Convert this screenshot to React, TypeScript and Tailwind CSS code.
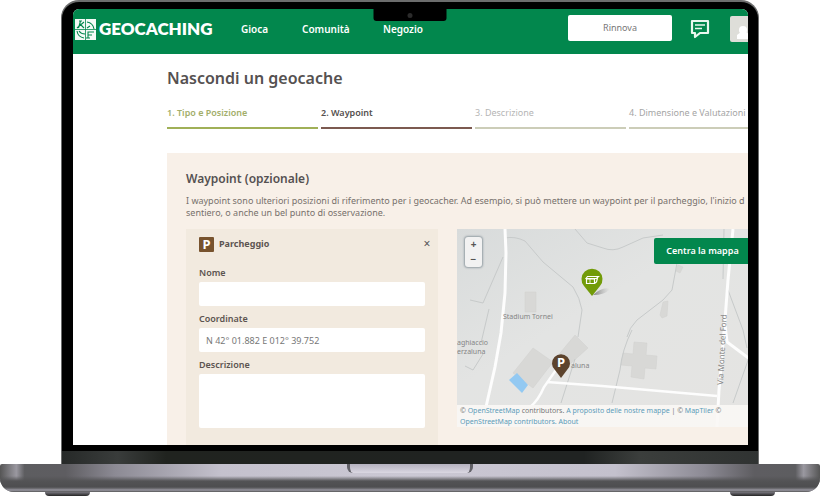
import React from 'react';

const navItems = [
  { label: 'Gioca', className: 'w-[61px]' },
  { label: 'Comunità', className: 'w-[81px]' },
  { label: 'Negozio', className: 'w-[60px]' },
];

const steps = [
  { label: '1. Tipo e Posizione', className: 'font-semibold text-[#a3ae6a] border-[#a0b057]' },
  { label: '2. Waypoint', className: 'font-semibold text-[#55504e] border-[#7c5a50]' },
  { label: '3. Descrizione', className: 'text-[#b5b5b5] border-[#cccdb8]' },
  { label: '4. Dimensione e Valutazioni', className: 'text-[#a5a5a5] border-[#cccdb8]' },
];

const LogoMark = () => (
  <svg viewBox="0 0 21 21" className="h-[21px] w-[21px] shrink-0" aria-hidden="true">
    <path fill="#f4faf6" d="M0 0h21v21H0z" />
    <g fill="none" stroke="#02874d" strokeWidth="1.1">
      <path d="M10.500 0v21M0 10.500h21" strokeWidth="0.800" />
      <path d="M4 2h3M5.500 2l-2 7M5 5l4 4M2 9l7-6" />
      <path d="M12 3q6 1 7 7M12 9l3-2" />
      <path d="M2 12q1 6 7 7M4 12q2 3 6 3" />
      <path d="M13 19v-6h6M13 16h4M11 19h4" />
    </g>
  </svg>
);

const Header = () => (
  <header className="flex h-[45px] items-center bg-[#02874d] pb-[5px] pl-[2px] text-white">
    <a href="#" className="flex w-[166px] shrink-0 items-center gap-[3px]">
      <LogoMark />
      <span className="font-[Lato] text-[17px] font-extrabold leading-5">GEOCACHING</span>
    </a>
    <nav className="flex shrink-0 text-[10px] font-semibold leading-4">
      {navItems.map((item) => (
        <a key={item.label} href="#" className={item.className}>
          {item.label}
        </a>
      ))}
    </nav>
    <div className="-mr-[8px] ml-auto flex shrink-0 items-center">
      <button className="mb-[2px] h-[26px] w-[104px] rounded-[2px] bg-white text-[9px] text-[#777]">Rinnova</button>
      <svg viewBox="0 0 20 20" className="ml-[18px] mr-[20px] h-5 w-5" fill="none" stroke="#e9f8ef" aria-hidden="true">
        <path d="M2 2h16v12h-8l-5 4v-4H2z" strokeWidth="2.200" strokeLinejoin="round" />
        <path d="M5 6h10M5 9.500h7" strokeWidth="1.600" />
      </svg>
      <svg viewBox="0 0 26 26" className="h-[26px] w-[26px]" aria-hidden="true">
        <rect width="26" height="26" rx="2" fill="#deded9" />
        <circle cx="13" cy="14" r="4" fill="#fff" />
        <path d="M7 23v-4l4-3h5l4 3v4z" fill="#fff" />
      </svg>
    </div>
  </header>
);

const WaypointForm = () => (
  <form className="w-[252px] shrink-0 bg-[#f2eadf] px-[13px] pb-[17px] pt-[7px] text-[9px]">
    <div className="mb-[15px] flex h-4 items-center gap-[5px]">
      <span className="flex h-[15px] w-[15px] items-center justify-center rounded-[1px] bg-[#78532e] text-[13px] font-bold leading-none text-white">
        P
      </span>
      <h3 className="font-bold text-[#5c5450]">Parcheggio</h3>
      <button type="button" aria-label="Chiudi" className="-mr-[10px] ml-auto w-4 text-center text-[12px] leading-4 text-[#555]">
        ×
      </button>
    </div>
    <div className="flex flex-col gap-[7px] font-semibold leading-3 text-[#5c5450]">
      <label className="flex flex-col gap-[3px]">
        Nome
        <input type="text" className="h-6 w-full rounded-[2px] bg-white px-[7px] font-normal" />
      </label>
      <label className="flex flex-col gap-[3px]">
        Coordinate
        <input
          type="text"
          defaultValue="N 42° 01.882 E 012° 39.752"
          className="h-6 w-full rounded-[2px] bg-white px-[7px] font-normal text-[#777]"
        />
      </label>
      <label className="flex flex-col gap-[3px]">
        Descrizione
        <textarea className="h-[54px] w-full resize-none rounded-[2px] bg-white px-[7px] font-normal" />
      </label>
    </div>
  </form>
);

const MapDrawing = () => (
  <svg viewBox="0 0 330 198" className="h-[198px] w-[330px]" role="img" aria-label="Mappa">
    <defs>
      <linearGradient id="land" x1="0" y1="0" x2="1" y2="1">
        <stop offset="0" stopColor="#d8dbdb" />
        <stop offset="0.400" stopColor="#e3e4e3" />
        <stop offset="1" stopColor="#e5e4e2" />
      </linearGradient>
      <linearGradient id="shade" x1="0" x2="1">
        <stop offset="0" stopColor="#555" stopOpacity="0.700" />
        <stop offset="1" stopColor="#999" stopOpacity="0" />
      </linearGradient>
    </defs>
    <rect width="330" height="198" fill="url(#land)" />
    {/* Buildings */}
    <g fill="#d8d8d6" stroke="#d0d0ce" strokeWidth="0.500">
      <path d="M68 63h11v20H68zM76 119l20 14-20 26-20-15zM118 106l13 13-29 26-8-10zM221 36l5 2-3 6-4-2zM206 73l5-1-1 15-5 2-2-3z" />
      <path d="M177 113l13 1-1 12 11 1-1 13-11-1-1 11-13-2 1-11-11-1 2-12 10 1z" />
    </g>
    <path d="M60 144l11 12-6 8-13-13z" fill="#93c9f2" />
    {/* Footpaths */}
    <g fill="none" stroke="#c7caca" strokeWidth="1">
      <path d="M48 9q10-2 20 3l18 21 30 25q7 11 9 23l-4 27M118 0l12 14 16 5q10 4 20-1l20-9 20-3" />
      <path d="M220 34l-5 27-9 10-26 20q-8 8-10 17M175 101q-10 20-12 40l-8 33M271 61l15 40 4 18M295 120l-19 54" />
      <path d="M46 28l-20 46-13-3M32 80l-8 34M26 125l-10 16-8-4M118 130l-14 44" />
      <path d="M267 0l-1 50" />
    </g>
    {/* Streets */}
    <g fill="none" stroke="#fdfdfd" strokeWidth="3">
      <path d="M48 0l1 24-1 40-4 40-6 34-9 40" />
      <path d="M276 0l-5 51-3 40-6 70-2 37M268 96l2 17 20 15 40 20" />
      <path d="M73 178q8-6 14-20l14-20M90 153l55 4 115 10" strokeWidth="2.500" />
    </g>
    <g fontFamily="Noto Sans, sans-serif" fontSize="7" fill="#858585">
      <text x="46" y="90">Stadium Tornei</text>
      <text x="0" y="116">aghiaccio</text>
      <text x="0" y="125">erzaluna</text>
      <text x="114" y="139">aluna</text>
      <text x="266" y="156" fontSize="8" transform="rotate(-87 266 156)">Via Monte del Ford</text>
    </g>
    {/* Pins */}
    <path d="M136 66q10-9 17-6-5 6-17 6z" fill="url(#shade)" />
    <path d="M135 67l-8-10a10.500 10.500 0 1 1 16 0z" fill="#729b09" />
    <path d="M129.500 50h8v4.500h-8zM129 49.500l1.500-2h11l-2 2zM137.500 54.500l2-1.500 1-4" fill="none" stroke="#fff" strokeWidth="1.200" />
    <path d="M133 50v4" stroke="#fff" strokeWidth="0.800" />
    <path d="M104 149l-6-8a9 9 0 1 1 12 0z" fill="#5c432d" />
    <text x="104" y="138" textAnchor="middle" fontFamily="Noto Sans, sans-serif" fontSize="13" fontWeight="700" fill="#fff">
      P
    </text>
  </svg>
);

const WaypointMap = () => (
  <div className="relative min-w-0 flex-1 self-start overflow-hidden">
    <MapDrawing />
    <div className="absolute left-2 top-2 flex h-[30px] w-[17px] flex-col rounded-[3px] bg-[#f2f2f2] text-[10px] font-bold leading-[15px] text-[#555] shadow-[0_0_2px_1px_#96a0a6]">
      <button aria-label="Ingrandisci">+</button>
      <button aria-label="Riduci">−</button>
    </div>
    <button className="absolute left-[197px] top-[9px] h-[26px] w-[97px] rounded-[2px] bg-[#02874d] text-[9px] font-semibold text-white">
      Centra la mappa
    </button>
    <div className="absolute inset-x-0 bottom-0 h-[22px] whitespace-nowrap bg-[#f9f7f5]/90 pl-[3px] text-[7px] leading-[11px] text-[#777]">
      © <a href="#" className="text-[#5b9bb9]">OpenStreetMap</a> contributors. <a href="#" className="text-[#5b9bb9]">A proposito delle nostre mappe</a> | ©{' '}
      <a href="#" className="text-[#5b9bb9]">MapTiler</a> ©
      <br />
      <a href="#" className="text-[#5b9bb9]">OpenStreetMap contributors. About</a>
    </div>
  </div>
);

const HideGeocachePage = () => (
  <div className="overflow-hidden rounded-t-[6px] bg-white font-['Noto_Sans',sans-serif]">
    <Header />
    <main className="pl-[94px]">
      <h1 className="pt-[14px] text-[16px] font-semibold leading-5 text-[#555151]">Nascondi un geocache</h1>
      <ol className="mt-[17px] grid min-w-[613px] grid-cols-4 gap-[3px] text-[9px] leading-4">
        {steps.map((step) => (
          <li key={step.label} className={`h-[24px] whitespace-nowrap border-b-2 ${step.className}`}>
            {step.label}
          </li>
        ))}
      </ol>
      <section className="mt-[24px] bg-[#f8f0e8] pl-[19px] pt-[18px]">
        <h2 className="text-[12px] font-semibold leading-4 text-[#555151]">Waypoint (opzionale)</h2>
        <p className="mb-[10px] mt-[8px] whitespace-nowrap text-[9px] leading-3 text-[#77716c]">
          I waypoint sono ulteriori posizioni di riferimento per i geocacher. Ad esempio, si può mettere un waypoint per il parcheggio, l'inizio d
          <br />
          sentiero, o anche un bel punto di osservazione.
        </p>
        <div className="flex gap-[19px]">
          <WaypointForm />
          <WaypointMap />
        </div>
      </section>
    </main>
  </div>
);

const LaptopBase = () => (
  <div>
    <div className="relative h-[28px] overflow-hidden rounded-b-[14px] rounded-t-[2px] bg-[linear-gradient(90deg,#555_0%,#9a98a0_2%,#5d5d60_3%,#5e5d61_8%,#8c8a94_14%,#c4c1cd_27%,#cbc8d4_50%,#c4c1cd_75%,#8c8a94_86%,#5e5d61_92%,#5d5d60_97%,#9a98a0_98%,#555_100%)]">
      <div className="h-full bg-[linear-gradient(180deg,#55555700_0px,#55555700_12px,#535355_17px,#4e4e50_23px,#77767b_25px,#9a98a3_26px,#555_28px)]" />
      <div className="absolute left-1/2 top-0 h-[9px] w-[126px] -translate-x-1/2 rounded-b-[6px] border-x-[3px] border-[#626168] bg-[linear-gradient(180deg,#b5b2bf,#dad7e2)]" />
    </div>
    <div className="flex justify-between px-[45px]">
      <div className="h-1 w-[45px] rounded-b-[4px] bg-[linear-gradient(180deg,#77757d,#252525)]" />
      <div className="h-1 w-[45px] rounded-b-[4px] bg-[linear-gradient(180deg,#77757d,#252525)]" />
    </div>
  </div>
);

const App = () => {
  return (
    <div className="overflow-hidden bg-white">
      {/* Lid */}
      <div className="relative mx-[61px] overflow-hidden rounded-t-[18px] border-x border-t-2 border-[#6c6d6d] bg-black">
        <div className="pb-[6px] pl-[11px] pr-[10px] pt-[7px]">
          <HideGeocachePage />
        </div>
        <div className="absolute left-1/2 top-[7px] flex h-3 w-[73px] -translate-x-1/2 items-center justify-center rounded-b-[3px] bg-black">
          <span className="h-[5px] w-[5px] rounded-full bg-[#2b2b2b]" />
        </div>
        <div className="h-[13px] bg-[linear-gradient(90deg,#262928,#393c3b_8%,#20231f_15%,#202322_75%,#3b3e3c_83%,#303332)]" />
      </div>
      <LaptopBase />
    </div>
  );
};

export default App;
